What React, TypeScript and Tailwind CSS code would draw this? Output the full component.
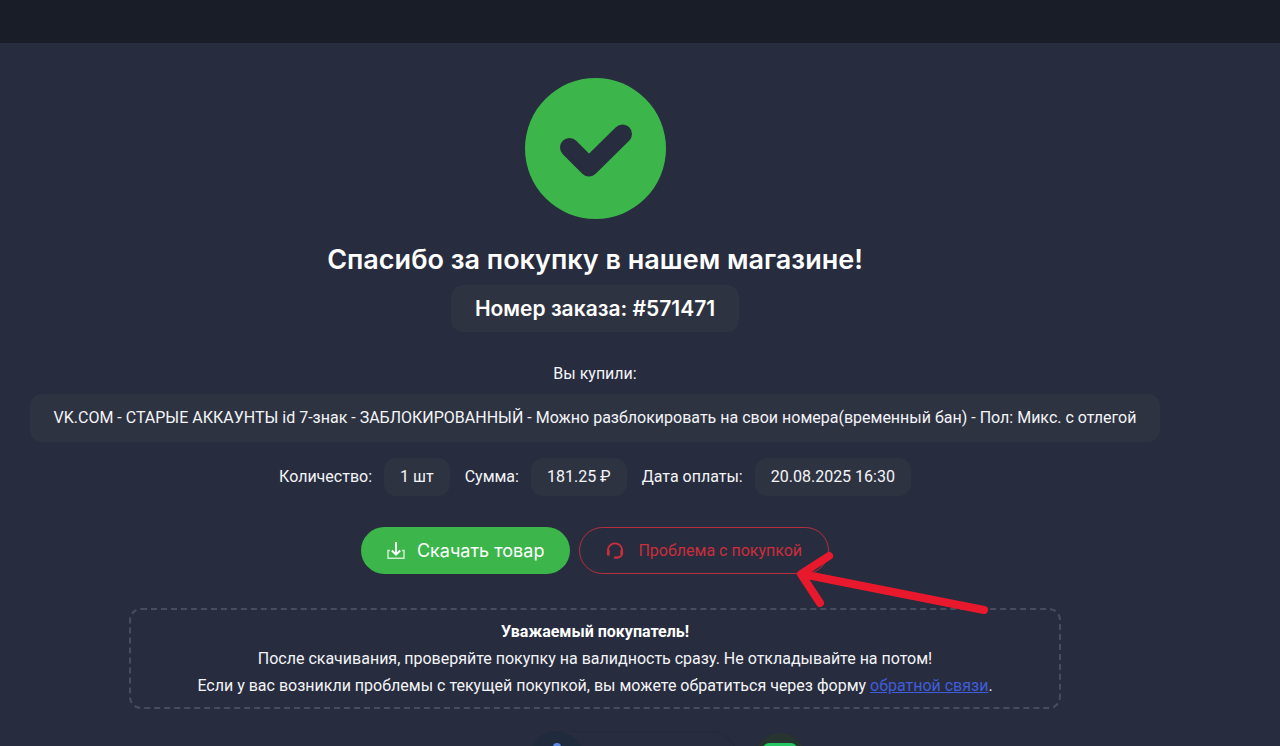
import React from "react";

const details = [
  { label: "Количество:", value: "1 шт" },
  { label: "Сумма:", value: "181.25 ₽" },
  { label: "Дата оплаты:", value: "20.08.2025 16:30" },
];

function SuccessIcon() {
  return (
    <svg viewBox="0 0 141 141" className="h-[141px] w-[141px]" aria-hidden="true">
      <circle cx="70.5" cy="70.5" r="70.5" fill="#3cb64a" />
      <path
        d="M44.5 69.5 L64 89 L97.5 56"
        fill="none"
        stroke="#272c3e"
        strokeWidth="19"
        strokeLinecap="round"
        strokeLinejoin="round"
      />
    </svg>
  );
}

function DownloadIcon() {
  return (
    <svg viewBox="0 0 18 18" className="h-[18px] w-[18px]" fill="none" aria-hidden="true">
      <path d="M3 8.5 H1 V16.3 H17 V8.5 H15" stroke="currentColor" strokeWidth="1.5" opacity="0.75" />
      <path d="M9 0 V12.5 M4.8 8.5 L9 12.7 L13.2 8.5" stroke="currentColor" strokeWidth="1.9" />
    </svg>
  );
}

function HeadsetIcon() {
  return (
    <svg viewBox="0 0 18 18" className="h-[18px] w-[18px]" fill="none" aria-hidden="true">
      <path d="M1.9 9 V8.2 A7.1 6.8 0 0 1 16.1 8.2 V11 C16.1 14.2 14 15.5 10.5 15.6" stroke="currentColor" strokeWidth="1.9" />
      <path d="M2.3 8.8 V12.4 M15.7 8.8 V12" stroke="currentColor" strokeWidth="2.8" strokeLinecap="round" />
      <path d="M8.8 15.6 H11" stroke="currentColor" strokeWidth="2.2" strokeLinecap="round" />
    </svg>
  );
}

function Arrow() {
  return (
    <svg
      viewBox="0 0 194 64"
      className="pointer-events-none absolute top-[23px] left-[216px] h-[64px] w-[194px]"
      fill="none"
      stroke="#e8192c"
      strokeWidth="8"
      strokeLinecap="round"
      strokeLinejoin="round"
      aria-hidden="true"
    >
      <path d="M189 60 L7 24 M34 6 L6 24 L25 53" />
    </svg>
  );
}

export default function App() {
  return (
    <div className="flex h-screen flex-col overflow-hidden bg-[#272c3e] font-['Roboto','Noto_Sans',sans-serif] text-base text-[#f4f5f8]">
      <header className="h-[43px] shrink-0 bg-[#191d28]" />
      <main className="flex flex-col items-center pt-[35px] pr-[120px] pl-[30px]">
        <SuccessIcon />
        <h1 className="mt-[23px] font-['Inter',sans-serif] text-[27px] leading-9 font-semibold text-white">
          Спасибо за покупку в нашем магазине!
        </h1>
        <p className="mt-[7px] rounded-xl bg-[#2e3342] px-6 py-2 font-['Inter',sans-serif] text-[21px] leading-[31px] font-semibold text-white">
          Номер заказа: #571471
        </p>

        <p className="mt-[30px] leading-6">Вы купили:</p>
        <p className="mt-2 flex w-full justify-center rounded-xl bg-[#2e3342] py-3 leading-6 whitespace-nowrap">
          VK.COM - СТАРЫЕ АККАУНТЫ id 7-знак - ЗАБЛОКИРОВАННЫЙ - Можно разблокировать на свои номера(временный бан) - Пол: Микс. с отлегой
        </p>

        <dl className="mt-4 flex gap-[15px] leading-6">
          {details.map((item) => (
            <div key={item.label} className="flex items-center gap-3">
              <dt>{item.label}</dt>
              <dd className="rounded-xl bg-[#2e3342] px-4 py-[7px]">{item.value}</dd>
            </div>
          ))}
        </dl>

        <div className="mt-[31px] flex gap-[9px]">
          <button className="flex h-[47px] items-center gap-3 rounded-full bg-[#3cb64a] px-[26px] font-['Inter',sans-serif] text-lg text-white">
            <DownloadIcon />
            Скачать товар
          </button>
          <div className="relative">
            <button className="flex h-[47px] items-center gap-[14px] rounded-full border border-[#b72f3e] px-[26px] text-[#cb2e3d]">
              <HeadsetIcon />
              Проблема с покупкой
            </button>
            <Arrow />
          </div>
        </div>

        <section className="mt-[34px] w-full max-w-[932px] rounded-xl border-2 border-dashed border-[#474c5e] py-2 text-center leading-[27px]">
          <h2 className="font-bold text-white">Уважаемый покупатель!</h2>
          <p>После скачивания, проверяйте покупку на валидность сразу. Не откладывайте на потом!</p>
          <p>
            Если у вас возникли проблемы с текущей покупкой, вы можете обратиться через форму{" "}
            <a href="#feedback" className="text-[#405ddb] underline">обратной связи</a>.
          </p>
        </section>

        <div className="mt-[22px] flex gap-[14px] pl-[146px]">
          <div className="flex h-14 w-[210px] rounded-full border border-[#252a3a]">
            <svg viewBox="0 0 56 56" className="h-14 w-14" aria-hidden="true">
              <circle cx="28" cy="28" r="28" fill="#1f2b3d" />
              <circle cx="28" cy="15" r="4" fill="#5b8be0" />
            </svg>
          </div>
          <svg viewBox="0 0 56 56" className="h-14 w-14" aria-hidden="true">
            <circle cx="28" cy="28" r="26" fill="#27342f" />
            <rect x="11" y="12" width="34" height="34" rx="6" fill="#27c563" />
          </svg>
        </div>
      </main>
    </div>
  );
}
